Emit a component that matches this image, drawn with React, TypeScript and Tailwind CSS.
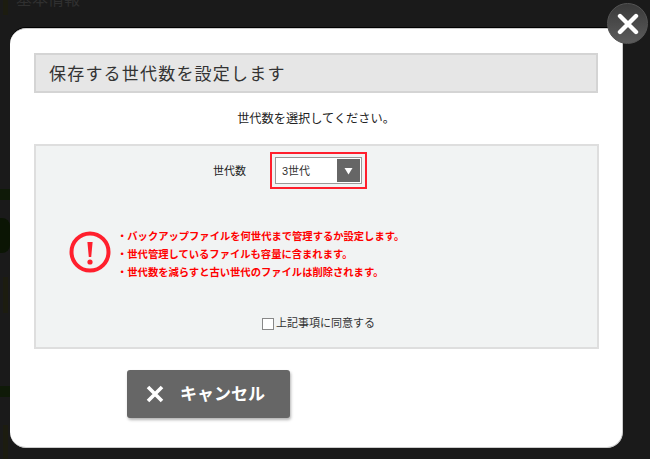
const sans = "font-['Liberation_Sans','Noto_Sans_CJK_JP',sans-serif]";

const notes = [
  "・バックアップファイルを何世代まで管理するか設定します。",
  "・世代管理しているファイルも容量に含まれます。",
  "・世代数を減らすと古い世代のファイルは削除されます。",
];

const App = () => {
  return (
    <div className={`relative h-[459px] w-[650px] overflow-hidden bg-[#1a1a1a] pt-7 pl-2.5 ${sans}`}>
      {/* page behind the overlay */}
      <div className="absolute top-0 left-[3px] h-[15px] w-[5px] bg-[#1c1c10]" />
      <div className="absolute top-[-10px] left-4 text-base leading-5 text-[#303030]">基本情報</div>
      <div className="absolute top-[189px] left-0 h-[11px] w-2.5 bg-[#0f1a08]" />
      <div className="absolute top-[218px] left-0 h-[35px] w-2.5 rounded-r-lg bg-[#0b1504]" />
      <div className="absolute top-[277px] left-[3px] h-9 w-[5px] bg-[#1c1c10]" />
      <div className="absolute top-[386px] left-0 h-[11px] w-2.5 bg-[#0f1a08]" />
      <div className="absolute top-[425px] left-[3px] h-[34px] w-[5px] bg-[#1c1c10]" />

      <div className="relative flex h-[420px] w-[613px] flex-col rounded-2xl border-t border-r border-b border-[#ccc] bg-white pt-6 pl-6 shadow-[0_-1px_0_#000]">
        <h1 className="flex h-10 w-[564px] items-center border-2 border-[#d4d4d4] bg-[#e6e6e6] pt-0.5 pl-[13px] text-[17px] leading-none font-normal tracking-[1.2px] text-[#333]">
          保存する世代数を設定します
        </h1>
        <p className="mt-[17px] w-[564px] text-center text-[12.2px] leading-[18px] text-[#222]">
          世代数を選択してください。
        </p>
        <div className="mt-4 flex h-[205px] w-[565px] flex-col border-2 border-[#dedede] bg-[#f1f3f3]">
          <div className="mt-1.5 flex items-center">
            <span className="ml-[177px] pt-0.5 text-[11px] text-[#222]">世代数</span>
            <div className="ml-[24px] flex h-[37px] w-[97px] items-center justify-center border-2 border-[#ff1f2d]">
              <div className="flex h-[27px] w-[87px] items-stretch justify-between border-2 border-[#999] bg-white outline-1 -outline-offset-2 outline-white">
                <span className="pl-[5px] text-[11px] leading-[24px] text-[#333]">3世代</span>
                <span className="flex w-[23px] items-center justify-center bg-[#666]">
                  <svg width="9" height="8" viewBox="0 0 9 8">
                    <path d="M0.5 1h8L4.5 7.5z" fill="#fff" />
                  </svg>
                </span>
              </div>
            </div>
          </div>
          <div className="mt-[36px] flex items-start">
            <svg className="mt-1.5 ml-[33px]" width="42" height="42" viewBox="0 0 42 42">
              <circle cx="21" cy="21" r="18.5" fill="none" stroke="#ff1f2d" strokeWidth="4" />
              <path d="M18.4 11h5.2l-1.4 15h-2.4z" fill="#ff1f2d" />
              <circle cx="21" cy="31" r="2.6" fill="#ff1f2d" />
            </svg>
            <ul className="mt-[3px] ml-1.5 text-[10.3px] leading-[18px] font-bold text-[#ff0000]">
              {notes.map((n) => (
                <li key={n}>{n}</li>
              ))}
            </ul>
          </div>
          <label className="mt-[34px] ml-[226px] flex items-center text-[11px] leading-none text-[#333]">
            <span className="mt-[2px] mr-0.5 h-3 w-3 border border-[#888] bg-white" />
            上記事項に同意する
          </label>
        </div>
        <button className="mt-[21px] ml-[93px] flex h-12 w-[163px] items-center rounded-[3px] bg-[#666] pl-[19px] text-[17px] leading-none font-bold text-white shadow-[1px_2px_3px_rgba(0,0,0,0.3)]">
          <svg width="18" height="18" viewBox="0 0 18 18">
            <path d="M2 2l14 14M16 2L2 16" stroke="#fff" strokeWidth="3.6" />
          </svg>
          <span className="ml-[16px] pt-px">キャンセル</span>
        </button>
      </div>

      <button className="absolute top-[3px] left-[607px] flex h-[41px] w-[41px] items-center justify-center rounded-full border border-[#555] bg-gradient-to-b from-[#3a3a3a] to-[#5c5c5c]">
        <svg width="22" height="22" viewBox="0 0 22 22">
          <path d="M3 3l16 16M19 3L3 19" stroke="#fff" strokeWidth="4.4" strokeLinecap="round" />
        </svg>
      </button>
    </div>
  );
};

export default App;
